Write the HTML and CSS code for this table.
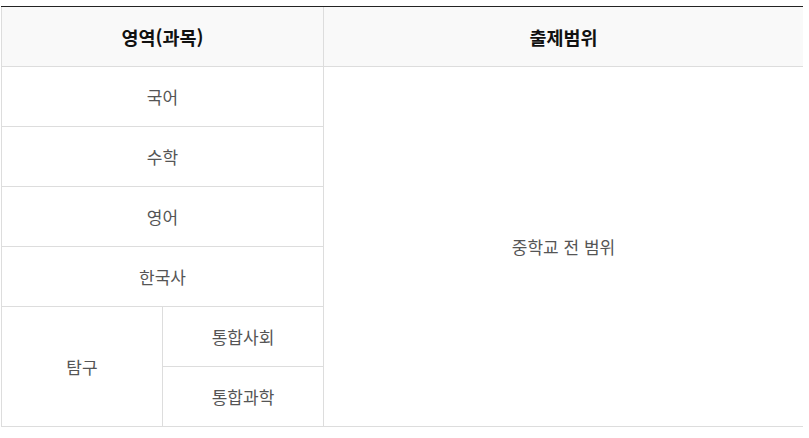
FILE: index.html
```html
<!DOCTYPE html>
<html lang="ko">
<head>
<meta charset="utf-8">
<link rel="stylesheet" href="styles.css">
</head>
<body>
<div class="grid">
  <div class="cell head span2">영역(과목)</div>
  <div class="cell head">출제범위</div>
  <div class="cell span2">국어</div>
  <div class="cell range">중학교 전 범위</div>
  <div class="cell span2">수학</div>
  <div class="cell span2">영어</div>
  <div class="cell span2">한국사</div>
  <div class="cell explore">탐구</div>
  <div class="cell">통합사회</div>
  <div class="cell">통합과학</div>
</div>
</body>
</html>
```
FILE: styles.css
```css
html, body {
  margin: 0;
  padding: 0;
  background: #fff;
}
body {
  font-family: "Noto Sans CJK KR", "Noto Sans", sans-serif;
}
.grid {
  display: grid;
  grid-template-columns: 161px 161px 480px;
  grid-template-rows: repeat(7, 60px);
  width: 802px;
  margin: 6px 0 0 1px;
  border-top: 1px solid #222;
}
.cell {
  box-sizing: border-box;
  border-left: 1px solid #ddd;
  border-bottom: 1px solid #ddd;
  display: flex;
  align-items: center;
  justify-content: center;
  font-size: 17px;
  color: #555;
}
.head {
  background: #f9f9f9;
  color: #111;
  font-weight: 700;
  font-size: 18.5px;
}
.span2 {
  grid-column: 1 / 3;
}
.range {
  grid-column: 3;
  grid-row: 2 / 8;
}
.explore {
  grid-column: 1;
  grid-row: 6 / 8;
}
```
